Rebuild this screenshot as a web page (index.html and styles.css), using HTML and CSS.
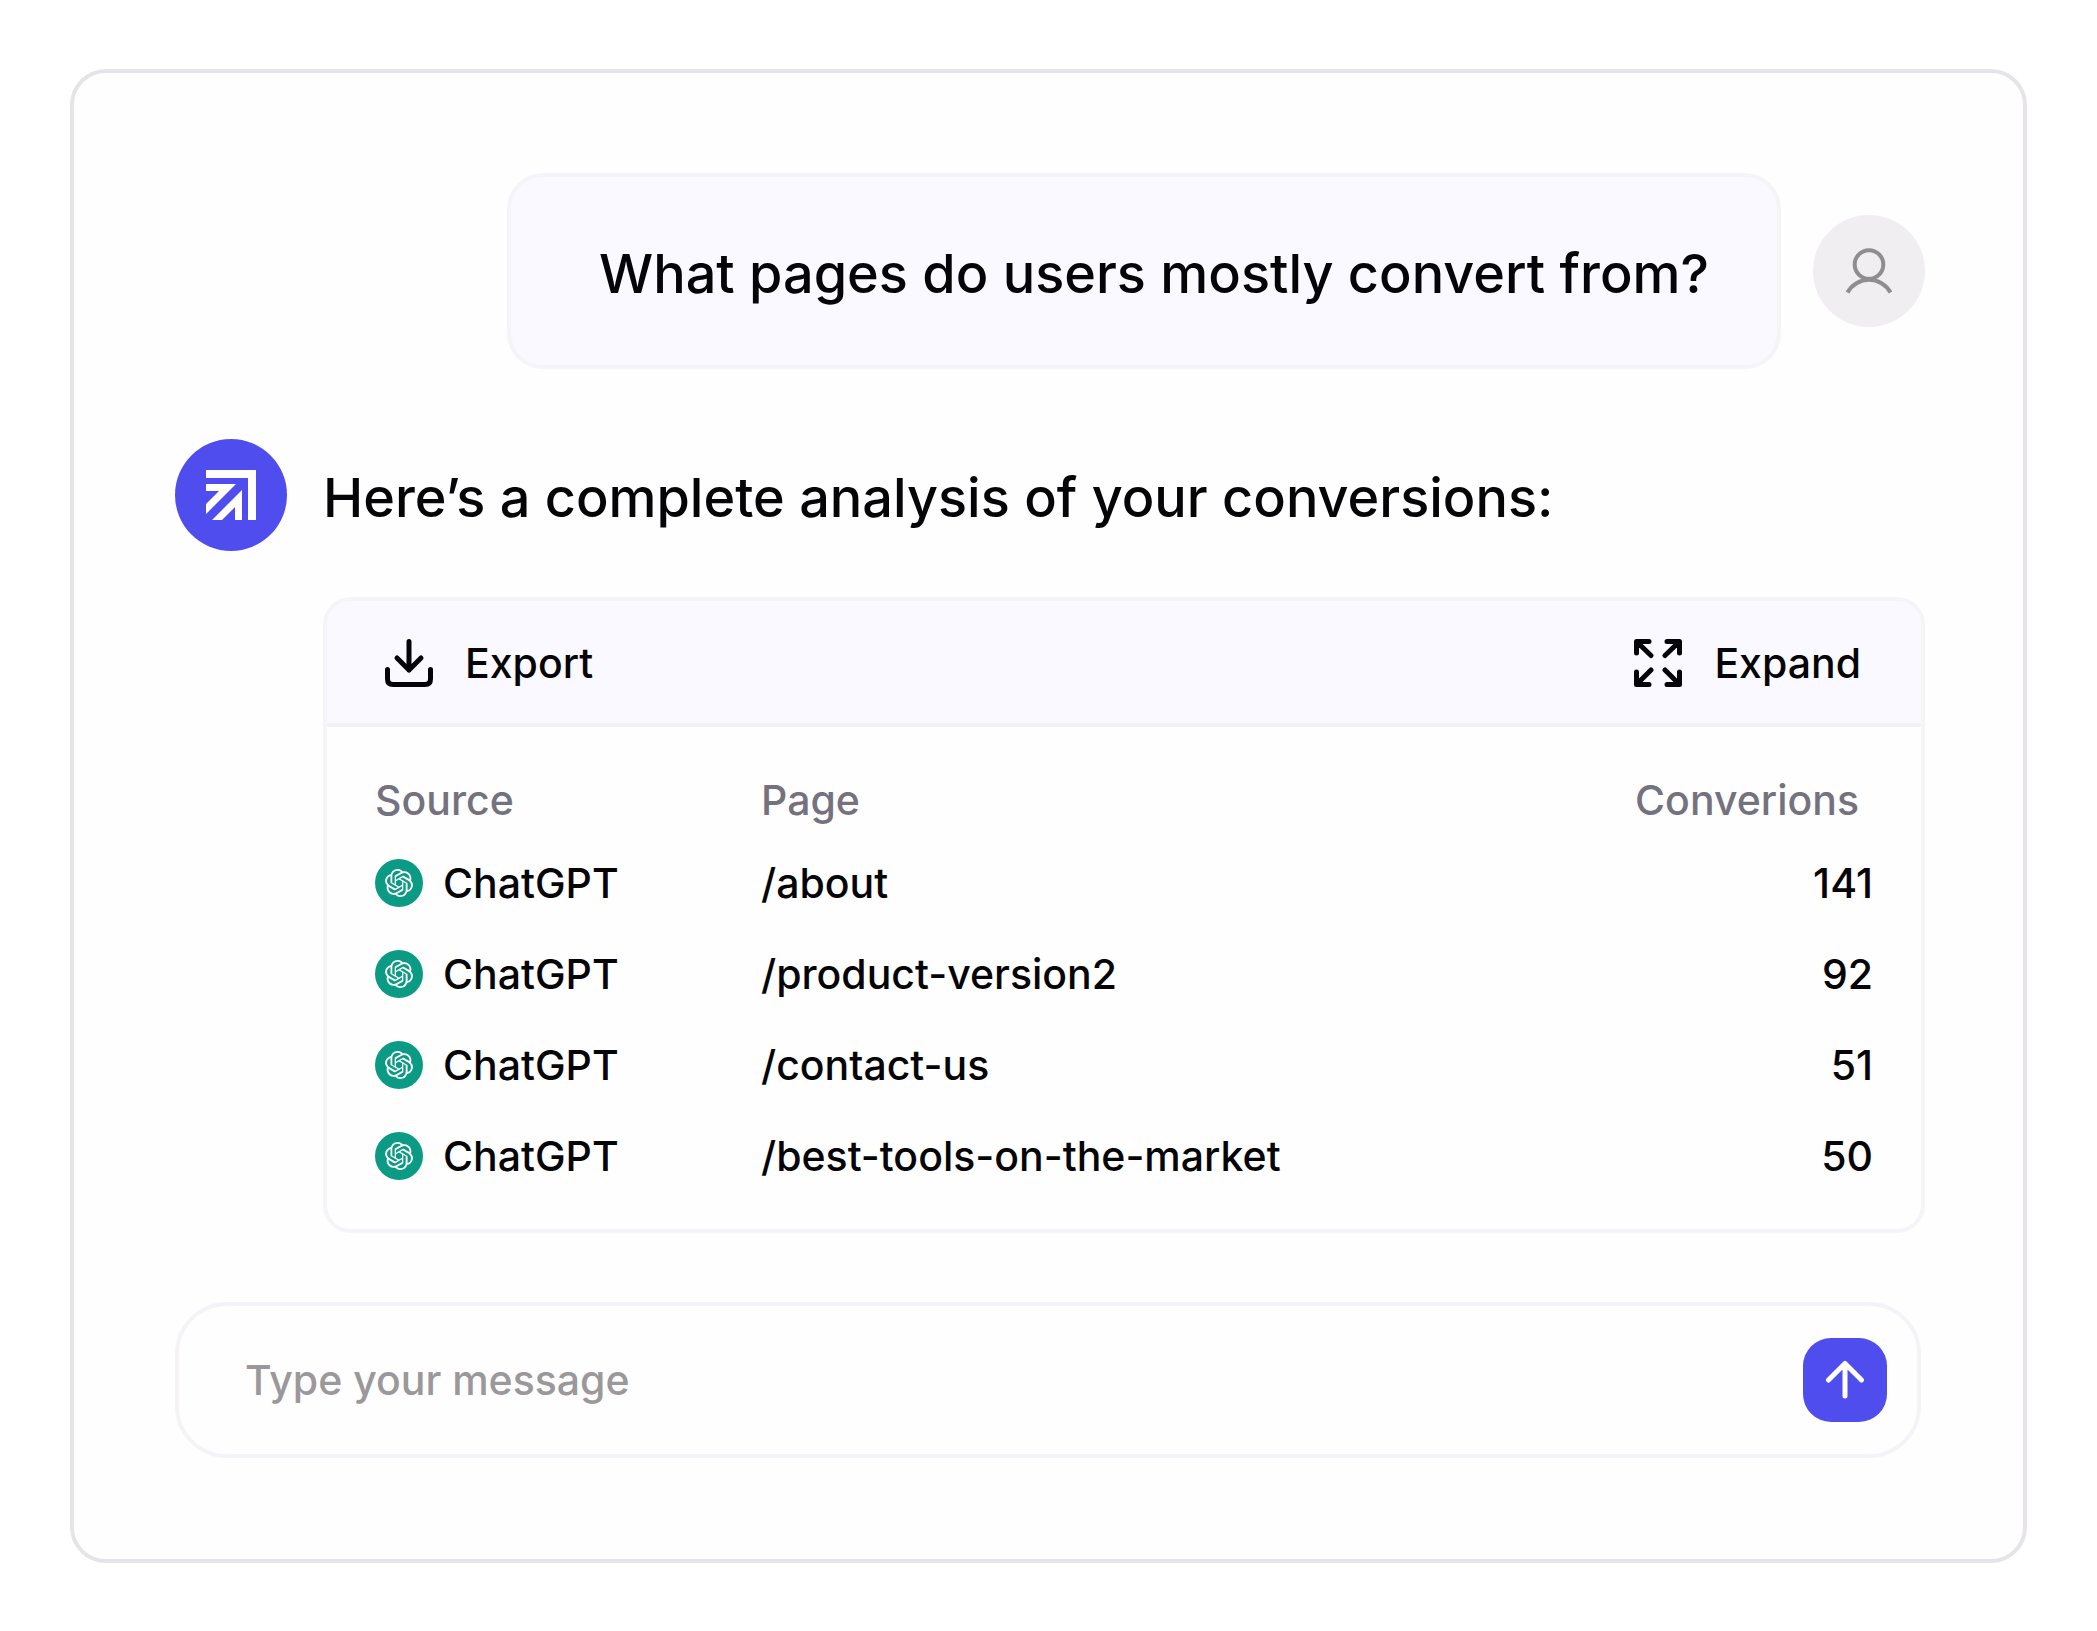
FILE: index.html
```html
<!DOCTYPE html>
<html lang="en">
<head>
<meta charset="utf-8">
<meta name="viewport" content="width=device-width, initial-scale=1">
<title>Conversions chat</title>
<link rel="stylesheet" href="styles.css">
</head>
<body>
<svg class="sprite" aria-hidden="true">
  <symbol id="openai" viewBox="0 0 24 24">
    <path d="M22.2819 9.8211a5.9847 5.9847 0 0 0-.5157-4.9108 6.0462 6.0462 0 0 0-6.5098-2.9A6.0651 6.0651 0 0 0 4.9807 4.1818a5.9847 5.9847 0 0 0-3.9977 2.9 6.0462 6.0462 0 0 0 .7427 7.0966 5.98 5.98 0 0 0 .511 4.9107 6.051 6.051 0 0 0 6.5146 2.9001A5.9847 5.9847 0 0 0 13.2599 24a6.0557 6.0557 0 0 0 5.7718-4.2058 5.9894 5.9894 0 0 0 3.9977-2.9001 6.0557 6.0557 0 0 0-.7475-7.0729zm-9.022 12.6081a4.4755 4.4755 0 0 1-2.8764-1.0408l.1419-.0804 4.7783-2.7582a.7948.7948 0 0 0 .3927-.6813v-6.7369l2.02 1.1686a.071.071 0 0 1 .038.052v5.5826a4.504 4.504 0 0 1-4.4945 4.4944zm-9.6607-4.1254a4.4708 4.4708 0 0 1-.5346-3.0137l.142.0852 4.783 2.7582a.7712.7712 0 0 0 .7806 0l5.8428-3.3685v2.3324a.0804.0804 0 0 1-.0332.0615L9.74 19.9502a4.4992 4.4992 0 0 1-6.1408-1.6464zM2.3408 7.8956a4.485 4.485 0 0 1 2.3655-1.9728V11.6a.7664.7664 0 0 0 .3879.6765l5.8144 3.3543-2.0201 1.1685a.0757.0757 0 0 1-.071 0l-4.8303-2.7865A4.504 4.504 0 0 1 2.3408 7.872zm16.5963 3.8558L13.1038 8.364 15.1192 7.2a.0757.0757 0 0 1 .071 0l4.8303 2.7913a4.4944 4.4944 0 0 1-.6765 8.1042v-5.6772a.79.79 0 0 0-.407-.667zm2.0107-3.0231l-.142-.0852-4.7735-2.7818a.7759.7759 0 0 0-.7854 0L9.409 9.2297V6.8974a.0662.0662 0 0 1 .0284-.0615l4.8303-2.7866a4.4992 4.4992 0 0 1 6.6802 4.66zM8.3065 12.863l-2.02-1.1638a.0804.0804 0 0 1-.038-.0567V6.0742a4.4992 4.4992 0 0 1 7.3757-3.4537l-.142.0805L8.704 5.459a.7948.7948 0 0 0-.3927.6813zm1.0976-2.3654l2.602-1.4998 2.6069 1.4998v2.9994l-2.5974 1.4997-2.6067-1.4997Z"/>
  </symbol>
</svg>
<main class="chat">
  <section class="question">
    <p class="bubble">What pages do users mostly convert from?</p>
    <span class="avatar avatar-user">
      <svg width="48" height="48" viewBox="0 0 48 48" role="img" aria-label="You">
        <circle cx="24" cy="17.500" r="14.300"/>
        <path d="M2.500 45.500A24.500 24.500 0 0 1 45.500 45.500"/>
      </svg>
    </span>
  </section>

  <section class="answer">
    <span class="avatar avatar-bot">
      <svg width="50" height="50" viewBox="0 0 50 50" role="img" aria-label="Assistant">
        <path d="M0 0H50V50H42V8H0Z"/>
        <path d="M0 14H30L0 44V34L13 21H0Z"/>
        <path d="M36 20V50H29V37L16 50H6Z"/>
      </svg>
    </span>
    <h1 class="heading">Here’s a complete analysis of your conversions:</h1>
    <div class="panel">
      <div class="toolbar">
        <button class="tool" type="button">
          <svg width="48" height="48" viewBox="0 0 48 48" aria-hidden="true">
            <path d="M24 2.500V31M12 19L24 31L36 19M2.500 30.500V40Q2.500 45.500 8 45.500H40Q45.500 45.500 45.500 40V30.500"/>
          </svg>
          Export
        </button>
        <button class="tool" type="button">
          <svg width="48" height="48" viewBox="0 0 48 48" aria-hidden="true">
            <path d="M2.500 14V2.500H15M3 3L17 16.500M33 2.500H45.500V14M45 3L31 16.500M2.500 33V45.500H15M3 45L17 31M33 45.500H45.500V33M45 45L31 31"/>
          </svg>
          Expand
        </button>
      </div>
      <div class="table-wrap">
        <table class="results">
          <thead>
            <tr><th class="col-source" scope="col">Source</th><th scope="col">Page</th><th class="col-count" scope="col">Converions</th></tr>
          </thead>
          <tbody>
            <tr><td><span class="source"><span class="badge"><svg width="28" height="28" aria-hidden="true"><use href="#openai"/></svg></span>ChatGPT</span></td><td>/about</td><td class="count">141</td></tr>
            <tr><td><span class="source"><span class="badge"><svg width="28" height="28" aria-hidden="true"><use href="#openai"/></svg></span>ChatGPT</span></td><td>/product-version2</td><td class="count">92</td></tr>
            <tr><td><span class="source"><span class="badge"><svg width="28" height="28" aria-hidden="true"><use href="#openai"/></svg></span>ChatGPT</span></td><td>/contact-us</td><td class="count">51</td></tr>
            <tr><td><span class="source"><span class="badge"><svg width="28" height="28" aria-hidden="true"><use href="#openai"/></svg></span>ChatGPT</span></td><td>/best-tools-on-the-market</td><td class="count">50</td></tr>
          </tbody>
        </table>
      </div>
    </div>
  </section>

  <form class="composer">
    <input class="message" type="text" aria-label="Message" placeholder="Type your message">
    <button class="send" type="button" aria-label="Send">
      <svg width="40" height="40" viewBox="0 0 40 40" aria-hidden="true">
        <path d="M20 3.500V36M3.500 20L20 3.500L36.500 20"/>
      </svg>
    </button>
  </form>
</main>
</body>
</html>
```
FILE: styles.css
```css
* {
  box-sizing: border-box;
}

body {
  margin: 0;
  padding: 69px 70px;
  background: #fff;
  color: #050508;
  font-family: Inter, "Liberation Sans", sans-serif;
  font-size: 41px;
  font-weight: 500;
  line-height: 48px;
}

button,
input {
  font: inherit;
  color: inherit;
}

svg {
  display: block;
  flex: none;
}

.sprite {
  display: none;
}

.chat {
  padding: 100px 98px 101px 101px;
  border: 4px solid #e6e4e8;
  border-radius: 36px;
  background: #fefefe;
}

.question {
  display: flex;
  justify-content: flex-end;
  align-items: center;
  gap: 32px;
}

.bubble {
  margin: 0;
  padding: 67px 68px 61px 88px;
  border: 4px solid #f5f4f9;
  border-radius: 36px;
  background: #faf9ff;
  font-size: 54px;
  line-height: 60px;
}

.avatar {
  display: flex;
  flex: none;
  align-items: center;
  justify-content: center;
  width: 112px;
  height: 112px;
  border-radius: 50%;
}

.avatar-user {
  background: #f0eef1;
}

.avatar-user svg {
  fill: none;
  stroke: #8f8d90;
  stroke-width: 4;
}

.avatar-bot {
  background: #4f4dee;
}

.avatar-bot svg {
  fill: #fff;
}

.answer {
  display: grid;
  grid-template-columns: 112px 1fr;
  column-gap: 36px;
  row-gap: 46px;
  align-items: center;
  margin-top: 70px;
}

.heading {
  margin: 0;
  padding-top: 6px;
  font-size: 54px;
  font-weight: 500;
  line-height: 60px;
}

.panel {
  grid-column: 2;
  border: 4px solid #f5f4f9;
  border-radius: 28px;
  overflow: hidden;
}

.toolbar {
  display: flex;
  justify-content: space-between;
  padding: 38px 60px 36px 58px;
  border-bottom: 4px solid #f3f2f8;
  background: #faf9ff;
}

.tool {
  display: flex;
  align-items: center;
  gap: 32px;
  padding: 0;
  border: 0;
  background: none;
  cursor: pointer;
}

.tool svg {
  fill: none;
  stroke: currentColor;
  stroke-width: 5;
  stroke-linecap: round;
  stroke-linejoin: round;
}

.table-wrap {
  padding: 36px 48px 28px;
}

.results {
  width: 100%;
  border-collapse: collapse;
}

.results th,
.results td {
  padding: 0;
  text-align: left;
}

.results th {
  height: 74px;
  color: #74727f;
  font-weight: 500;
}

.results td {
  height: 91px;
}

.results .col-source {
  width: 386px;
}

.results .col-count {
  padding-right: 14px;
  text-align: right;
}

.results .count {
  text-align: right;
}

.source {
  display: flex;
  align-items: center;
  gap: 20px;
}

.badge {
  display: flex;
  align-items: center;
  justify-content: center;
  width: 48px;
  height: 48px;
  border-radius: 50%;
  background: #0b9a84;
}

.badge svg {
  fill: #fff;
}

.composer {
  display: flex;
  align-items: center;
  margin-top: 69px;
  margin-right: 4px;
  padding: 32px 30px 32px 66px;
  border: 4px solid #f5f3f7;
  border-radius: 52px;
}

.message {
  flex: 1;
  min-width: 0;
  height: 48px;
  padding: 0;
  border: 0;
  outline: 0;
  background: none;
}

.message::placeholder {
  color: #9a989b;
  opacity: 1;
}

.send {
  display: flex;
  align-items: center;
  justify-content: center;
  width: 84px;
  height: 84px;
  padding: 0;
  border: 0;
  border-radius: 28px;
  background: #4f4dee;
  cursor: pointer;
}

.send svg {
  fill: none;
  stroke: #fff;
  stroke-width: 5;
  stroke-linecap: round;
  stroke-linejoin: round;
}
```
